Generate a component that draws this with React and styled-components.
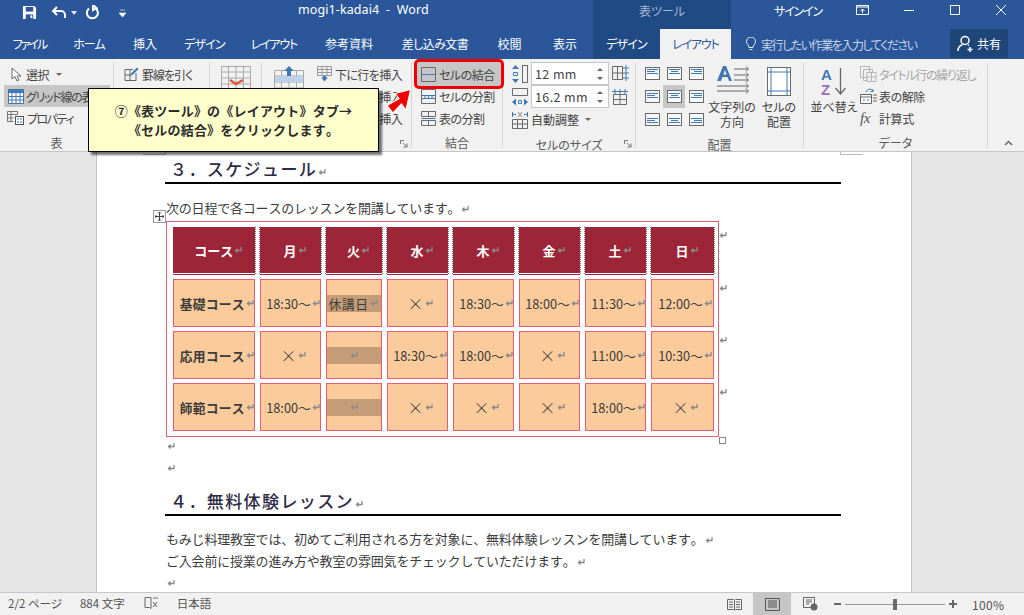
import React from 'react';
import styled, { createGlobalStyle } from 'styled-components';

const UI_FONT = '"Noto Sans CJK JP", "Noto Sans", sans-serif';

const Global = createGlobalStyle`
  html, body { margin: 0; padding: 0; overflow: hidden; }
  body { font-family: ${UI_FONT}; font-feature-settings: "palt"; }
`;

const Screen = styled.div`
  position: relative;
  width: 1024px;
  height: 615px;
  display: flex;
  flex-direction: column;
  overflow: hidden;
  background: #e6e6e6;
`;

/* title bar */
const TitleBar = styled.div`
  height: 29px;
  flex: none;
  display: flex;
  background: #2b579a;
  color: #fff;
`;
const QuickAccess = styled.div`
  width: 593px;
  display: flex;
  align-items: center;
  padding: 0 0 4px 22px;
  box-sizing: border-box;
  flex: none;
  font-size: 12.5px;
  font-family: "Noto Sans", sans-serif;
`;
const QuickIcon = styled.svg`
  flex: none;
  margin-right: ${p => p.$gap || 0}px;
`;
const DocName = styled.span`
  align-self: flex-start;
  line-height: 20px;
  margin-left: 172px;
  white-space: pre;
  letter-spacing: 0.1px;
`;
const ToolsLabel = styled.div`
  width: 138px;
  flex: none;
  background: #204a84;
  color: #a8bad6;
  font-size: 12px;
  text-align: center;
  line-height: 22px;
`;
const WindowArea = styled.div`
  flex: 1;
  display: flex;
  align-items: center;
  font-size: 12px;
  padding-bottom: 9px;
  padding-left: 43px;
`;
const SignIn = styled.span`
  width: 46px;
  margin-right: 36px;
  white-space: nowrap;
  letter-spacing: -1.2px;
`;
const WinIcon = styled.svg`
  flex: none;
  margin-right: ${p => p.$gap || 0}px;
`;

/* tabs */
const TabBar = styled.div`
  height: 30px;
  flex: none;
  display: flex;
  background: #2b579a;
  color: #fff;
  font-size: 12px;
`;
const Tab = styled.div`
  width: ${p => p.$w}px;
  flex: none;
  text-align: center;
  line-height: 30px;
  letter-spacing: ${p => p.$ls || 0}px;
  background: ${p => (p.$active ? '#f1f1f1' : p.$tool ? '#204a84' : 'transparent')};
  color: ${p => (p.$active ? '#2b579a' : '#fff')};
`;
const TellMe = styled.div`
  width: 219px;
  flex: none;
  display: flex;
  align-items: center;
  gap: 5px;
  padding-left: 15px;
  box-sizing: border-box;
  color: #c6d3e6;
  letter-spacing: -1.45px;
`;
const Share = styled.div`
  width: 58px;
  height: 29px;
  flex: none;
  display: flex;
  align-items: center;
  gap: 3px;
  padding-left: 7px;
  box-sizing: border-box;
  background: #1f4679;
`;

/* ribbon */
const Ribbon = styled.div`
  height: 93px;
  flex: none;
  display: flex;
  box-sizing: border-box;
  background: #f1f1f1;
  border-bottom: 1px solid #c6c6c6;
  color: #444;
  font-size: 12px;
`;
const Group = styled.section`
  position: relative;
  width: ${p => p.$w}px;
  flex: none;
  display: flex;
  flex-direction: column;
  box-sizing: border-box;
  margin: 4px 0 3px;
  border-right: 1px solid #d4d4d4;
`;
const GroupBody = styled.div`
  position: relative;
  flex: 1;
  display: flex;
  padding-left: ${p => p.$pad || 0}px;
`;
const GroupLabel = styled.div`
  height: 19px;
  flex: none;
  text-align: center;
  line-height: 28px;
  color: #5a5a5a;
`;
const Launcher = styled.svg`
  position: absolute;
  right: 3px;
  bottom: 0;
`;
const Stack = styled.div`
  display: flex;
  flex-direction: column;
  margin-top: ${p => p.$top || 0}px;
  width: ${p => (p.$w ? `${p.$w}px` : 'auto')};
`;
const SmallBtn = styled.div`
  height: 22px;
  flex: none;
  display: flex;
  align-items: center;
  gap: ${p => p.$gap ?? 3}px;
  padding-left: ${p => p.$pad ?? 0}px;
  white-space: nowrap;
  letter-spacing: ${p => p.$ls ?? -0.4}px;
  background: ${p => (p.$on ? '#c6c6c6' : 'transparent')};
  color: ${p => (p.$off ? '#a6a6a6' : '#444')};
`;
const BigBtn = styled.div`
  width: ${p => p.$w}px;
  flex: none;
  display: flex;
  flex-direction: column;
  align-items: center;
  text-align: center;
  line-height: 15px;
  white-space: nowrap;
`;
const BigIconSlot = styled.div`
  height: 36px;
  display: flex;
  align-items: center;
`;
const Arrow = styled.span`
  width: 0;
  height: 0;
  margin-left: 3px;
  border-left: 3px solid transparent;
  border-right: 3px solid transparent;
  border-top: 3px solid #666;
`;
const SizeRow = styled.div`
  height: 23px;
  display: flex;
  align-items: center;
  gap: 3px;
  white-space: nowrap;
`;
const Spin = styled.div`
  width: 78px;
  height: 23px;
  box-sizing: border-box;
  display: flex;
  align-items: center;
  justify-content: space-between;
  padding: 0 5px 0 3px;
  background: #fff;
  border: 1px solid #c6c6c6;
  font-size: 12.5px;
  color: #444;
  letter-spacing: 0.4px;
`;
const SpinMarks = styled.span`
  display: flex;
  flex-direction: column;
  gap: 6px;
`;
const AlignGrid = styled.div`
  display: grid;
  grid-template-columns: repeat(3, 22px);
  grid-template-rows: repeat(3, 23px);
  width: 66px;
  height: 69px;
  flex: none;
  margin-top: -1px;
`;
const AlignCell = styled.div`
  display: flex;
  align-items: center;
  justify-content: center;
  padding-bottom: 1px;
  box-sizing: border-box;
  background: ${p => (p.$on ? '#c6c6c6' : 'transparent')};
`;
const Collapse = styled.svg`
  align-self: flex-end;
  margin: 0 0 5px 16px;
  flex: none;
`;

/* overlays */
const MergeRing = styled.div`
  position: absolute;
  left: 2px;
  top: -4px;
  width: 90px;
  height: 30px;
  box-sizing: border-box;
  border: 3px solid #f00000;
  border-radius: 5px;
  background: #c6c6c6;
`;
const Callout = styled.div`
  position: absolute;
  left: 88px;
  top: 88px;
  width: 291px;
  height: 64px;
  box-sizing: border-box;
  padding-top: 12px;
  border: 1px solid #000;
  background: #ffffcc;
  box-shadow: 3px 3px 2px rgba(0, 0, 0, 0.55);
  text-align: center;
  font-size: 13px;
  line-height: 19px;
  font-weight: 700;
  color: #2c2c2c;
  font-feature-settings: normal;
  font-kerning: none;
  text-spacing-trim: space-all;
  letter-spacing: 0.2px;
`;
const RedArrow = styled.svg`
  position: absolute;
  left: 384px;
  top: 86px;
`;

/* document */
const DocArea = styled.div`
  flex: 1;
  display: flex;
  min-height: 0;
`;
const Page = styled.main`
  position: relative;
  width: 816px;
  margin-left: 96px;
  box-sizing: border-box;
  background: #fff;
  border-left: 1px solid #c6c6c6;
  border-right: 1px solid #c6c6c6;
  padding: 6px 70px 0 68px;
  color: #3c3c3c;
  overflow: hidden;
  font-kerning: none;
  text-spacing-trim: space-all;
`;
const Corner = styled.div`
  position: absolute;
  top: -1px;
  width: 23px;
  height: 4px;
  box-sizing: border-box;
  border: 1px solid #bbb;
  ${p => (p.$right ? 'left: 743px; border-right: 0;' : 'left: 46px; border-left: 0;')}
`;
const Heading = styled.h2`
  margin: ${p => p.$top || 0}px 0 0;
  height: 24px;
  padding-left: 5px;
  border-bottom: 2px solid #000;
  font-size: 17px;
  line-height: 21px;
  font-weight: 500;
  letter-spacing: 1.4px;
  color: #2f2b45;
  font-feature-settings: normal;
  white-space: nowrap;
`;
const Para = styled.p`
  margin: ${p => p.$top || 0}px 0 0;
  height: 22px;
  padding-left: 1px;
  font-size: 13px;
  letter-spacing: -0.2px;
  line-height: 22px;
  white-space: nowrap;
  font-feature-settings: normal;
`;
const Mark = styled.svg`
  display: inline-block;
  vertical-align: -1px;
  flex: none;
`;
const TableLine = styled.div`
  display: flex;
  margin: 2px 0 0 1px;
`;
const TableBox = styled.div`
  position: relative;
  width: 553px;
  height: 216px;
  flex: none;
  box-sizing: border-box;
  padding: 5px 0 0 6px;
  border: 1px solid #e0606f;
`;
const CourseGrid = styled.div`
  display: grid;
  grid-template-columns: 81.5px 61px 56px 61px 61px 61px 61px 63px;
  grid-template-rows: 48px 48px 48px 48px;
  column-gap: 5px;
  row-gap: 4px;
`;
const HeadCell = styled.div`
  position: relative;
  display: flex;
  align-items: center;
  justify-content: center;
  box-sizing: border-box;
  background: #9c2637;
  border-bottom: 1px solid #9c2637;
  box-shadow: inset 0 -1px 0 #fff;
  color: #fff;
  font-size: 13px;
  font-weight: 700;
  font-feature-settings: normal;
  padding-left: 10px;
  &:not(:last-child)::after {
    content: '';
    position: absolute;
    left: 100%;
    top: 0;
    bottom: 0;
    width: 3px;
    border-left: 1px dotted #777;
    border-right: 1px dotted #777;
  }
`;
const Cell = styled.div`
  position: relative;
  display: flex;
  align-items: center;
  justify-content: center;
  box-sizing: border-box;
  padding-left: ${p => (p.$band ? 0 : 7)}px;
  background: #fbcb9b;
  border: 1px solid #e0606f;
  color: #3c3c3c;
  font-size: 12.75px;
  font-weight: ${p => (p.$bold ? 700 : 400)};
  letter-spacing: ${p => (p.$bold ? 0.3 : 0)}px;
  font-feature-settings: normal;
  white-space: nowrap;
`;
const Cross = styled.span`
  font-size: 16px;
  font-weight: 300;
  line-height: 16px;
`;
const Band = styled.div`
  width: 100%;
  height: 17px;
  background: #c49c78;
  display: flex;
  align-items: center;
  justify-content: center;
  letter-spacing: 0.6px;
`;
const RowEnds = styled.div`
  display: grid;
  grid-template-rows: 53px 52px 52px 52px;
  padding-top: 10px;
  margin-left: -1px;
`;
const EndSlot = styled.div`
  height: 10px;
  display: flex;
`;
const MoveHandle = styled.div`
  position: absolute;
  left: -14px;
  top: -12px;
  width: 11px;
  height: 11px;
  border: 1px solid #999;
  background: #fff;
  display: flex;
  align-items: center;
  justify-content: center;
`;
const SizeHandle = styled.div`
  position: absolute;
  right: -8px;
  bottom: -8px;
  width: 5px;
  height: 5px;
  border: 1px solid #888;
  background: #fff;
`;
const Blank = styled.div`
  height: 22px;
  padding-left: 1px;
  display: flex;
  align-items: center;
  margin-top: ${p => p.$top || 0}px;
`;

/* status bar */
const StatusBar = styled.footer`
  height: 23px;
  flex: none;
  display: flex;
  align-items: stretch;
  box-sizing: border-box;
  border-top: 1px solid #c6c6c6;
  background: #f1f1f1;
  color: #555;
  font-size: 11.5px;
`;
const StatusLeft = styled.div`
  width: 727px;
  display: flex;
  align-items: center;
  padding: 0 0 2px 8px;
  box-sizing: border-box;
  flex: none;
`;
const StatusItem = styled.span`
  margin-right: ${p => p.$gap || 0}px;
  display: flex;
  align-items: center;
`;
const ViewSlot = styled.div`
  width: ${p => p.$w}px;
  margin-left: ${p => p.$left || 0}px;
  flex: none;
  display: flex;
  align-items: center;
  justify-content: center;
  background: ${p => (p.$on ? '#c6c6c6' : 'transparent')};
`;
const Zoom = styled.div`
  display: flex;
  align-items: center;
  flex: none;
  margin-left: 16px;
`;
const ZoomTrack = styled.div`
  position: relative;
  width: 100px;
  height: 1px;
  margin: 0 4px;
  background: #9a9a9a;
`;
const ZoomThumb = styled.div`
  position: absolute;
  left: 48px;
  top: -5px;
  width: 4px;
  height: 11px;
  background: #6a6a6a;
`;
const ZoomValue = styled.span`
  margin-left: 15px;
  font-size: 12px;
  letter-spacing: 0.3px;
`;

/* icons */
const BLUE = '#3f78b5';
const GREY = '#6a6a6a';

const Ret = () => (
  <Mark width="10" height="9" viewBox="0 0 10 9">
    <path d="M8 1v3.500H2.500M4.500 2.500l-2 2 2 2" fill="none" stroke="#8a8a8a" strokeWidth="1.300" />
  </Mark>
);

const GridLinesIcon = () => (
  <svg width="16" height="15" viewBox="0 0 16 15" style={{ flex: 'none' }}>
    <path d="M.5.500h15v14H.5z" fill="#fff" stroke={BLUE} />
    <path d="M1 1h14v3H1z" fill={BLUE} />
    <path d="M.5 7.500h15M.5 11h15M4 4v10M8 4v10M12 4v10" stroke={BLUE} />
  </svg>
);

const Pointer = () => (
  <svg width="11" height="15" viewBox="0 0 11 15">
    <path d="M1 1v11l3-2.500 2 4.500 2-1-2-4h4z" fill="#fff" stroke="#666" />
  </svg>
);

const Pencil = () => (
  <svg width="16" height="16" viewBox="0 0 16 16">
    <path d="M2 3.500h8M2 3.500v11h11V7M2 9h6M7 4v10" fill="none" stroke="#666" />
    <path d="M7 10l1.500-3L14 1.500l1.500 1.500L10 8.500z" fill={BLUE} />
  </svg>
);

const Props = () => (
  <svg width="18" height="16" viewBox="0 0 18 16">
    <path d="M.5 1.500h10v3M.5 1.500v10h6M.5 4.500h10M4 1.500v10M.5 8h6" fill="none" stroke="#777" />
    <rect x="8.500" y="6.500" width="8" height="8" fill="#fff" stroke="#555" />
    <path d="M10 9h2M13 9h2M10 12h2M13 12h2" stroke={BLUE} />
  </svg>
);

const DeleteTable = () => (
  <svg width="30" height="30" viewBox="0 0 30 30">
    <path d="M.5.500h29v22H.5zM.5 6h29M.5 12h29M.5 18h29M7.500.500v22M15 .500v22M22.500.500v22" fill="none" stroke="#aaa" />
    <path d="M9 14l6 4 7-4" fill="none" stroke="#d8583a" strokeWidth="2.400" />
  </svg>
);

const InsertAbove = () => (
  <svg width="30" height="30" viewBox="0 0 30 30">
    <path d="M.5 4.500h29v25H.5zM.5 10h29M.5 16h29M.5 22h29M7.500 4.500v25M15 4.500v25M22.500 4.500v25" fill="none" stroke="#aaa" />
    <rect x="1" y="10" width="28" height="6" fill="#bcd2e8" />
    <path d="M15 0l5 5h-3v5h-4V5h-3z" fill={BLUE} />
  </svg>
);

const InsertRow = () => (
  <svg width="15" height="16" viewBox="0 0 15 16" style={{ flex: 'none' }}>
    <path d="M.5.500h14v9H.5zM.5 3.500h14M.5 6.500h14M5 .500v9M10 .500v9" fill="none" stroke="#999" />
    <path d="M7.500 15.500l3.500-4H9V10H6v1.500H4z" fill={BLUE} />
  </svg>
);

const MergeIcon = () => (
  <svg width="15" height="15" viewBox="0 0 15 15" style={{ flex: 'none' }}>
    <path d="M.5.500h14v14H.5zM.5 7.500h14" fill="none" stroke={GREY} />
    <path d="M1 7.500h13" stroke={BLUE} />
  </svg>
);
const SplitIcon = () => (
  <svg width="15" height="15" viewBox="0 0 15 15" style={{ flex: 'none' }}>
    <path d="M.5.500h14v14H.5z" fill="none" stroke={GREY} />
    <path d="M.5 6.500h14M.5 9.500h14M4 6.500v3M7.500 6.500v3M11 6.500v3" stroke={BLUE} />
  </svg>
);
const SplitTableIcon = () => (
  <svg width="15" height="15" viewBox="0 0 15 15" style={{ flex: 'none' }}>
    <path d="M.5.500h14v5H.5zM.5 9.500h14v5H.5zM7.500.500v5M7.500 9.500v5" fill="none" stroke={GREY} />
    <path d="M.5 7.500h14" stroke={BLUE} />
  </svg>
);

const RowHeight = () => (
  <svg width="16" height="18" viewBox="0 0 16 18" style={{ flex: 'none' }}>
    <rect x="10.500" y=".5" width="5" height="17" fill="none" stroke={GREY} />
    <path d="M3.500 0L0 4h7zM3.500 18L0 14h7z" fill={BLUE} />
    <path d="M1.500 7.500h4v3h-4z" fill="none" stroke={BLUE} />
  </svg>
);
const ColWidth = () => (
  <svg width="16" height="18" viewBox="0 0 16 18" style={{ flex: 'none' }}>
    <path d="M.5.500h15v7H.5z" fill="none" stroke={GREY} />
    <path d="M0 14l4-3.500v7zM16 14l-4-3.500v7z" fill={BLUE} />
    <path d="M6.500 12.500h3v3h-3z" fill="none" stroke={BLUE} />
  </svg>
);
const AutoFit = () => (
  <svg width="16" height="18" viewBox="0 0 16 18" style={{ flex: 'none' }}>
    <path d="M.5 8.500h15v9H.5zM.5 13h15M5.500 8.500v9M10.500 8.500v9" fill="none" stroke={GREY} />
    <path d="M0 3.500h4M12 3.500h4M.5 1v5M15.500 1v5" stroke={BLUE} />
    <path d="M6 1l4 5M10 1L6 6" stroke="#888" />
  </svg>
);
const Distribute = ({ vertical }) => (
  <svg width="17" height="17" viewBox="0 0 17 17" style={{ flex: 'none' }}>
    {vertical ? (
      <>
        <path d="M1.500 6.500h13v10h-13zM1.500 11.500h13M8 6.500v10" fill="none" stroke={GREY} />
        <path d="M3 1v5M8 1v5M13 1v5M0 3.500h16" stroke={BLUE} />
      </>
    ) : (
      <>
        <path d="M.5 1.500h10v13H.5zM.5 8h10M5.500 1.500v13" fill="none" stroke={GREY} />
        <path d="M14 0v16M11 3h6M11 8h6M11 13h6" stroke={BLUE} />
      </>
    )}
  </svg>
);

const AlignIcon = ({ v, h }) => {
  const y = { t: 3, m: 4, b: 6 }[v];
  const [a, w] = h === 'l' ? [2, 8] : h === 'c' ? [4, 7] : [5, 8];
  return (
    <svg width="15" height="13" viewBox="0 0 15 13">
      <rect x=".5" y=".5" width="14" height="12" fill="#f8f8f8" stroke={GREY} />
      <path d={`M2 ${y - 0.5}H13M${a} ${y + 1.5}h${w}M2 ${y + 3.5}H13`} stroke={BLUE} />
    </svg>
  );
};

const TextDir = () => (
  <svg width="33" height="32" viewBox="0 0 33 32">
    <path d="M1 16L7 1h3l6 15h-3l-1.500-4h-5L5 16zM7.300 9.500h3.400L9 5z" fill={BLUE} />
    <path d="M18 4h14M18 10h14M18 15h14M1 21h31M1 26h31" stroke="#666" fill="none" />
    <path d="M30 1.500l2.500 2.500-2.500 2.500M30 7.500l2.500 2.500-2.500 2.500M30 12.500l2.500 2.500-2.500 2.500M30 18.500l2.500 2.500-2.500 2.500M30 23.500l2.500 2.500-2.500 2.500" stroke="#666" fill="none" />
  </svg>
);
const CellMargin = () => (
  <svg width="24" height="29" viewBox="0 0 24 29">
    <rect x=".5" y=".5" width="23" height="28" fill="#fff" stroke={GREY} />
    <path d="M4 .5v28M20 .5v28M.5 5h23M.5 24h23" stroke={BLUE} />
  </svg>
);
const SortIcon = () => (
  <svg width="26" height="34" viewBox="0 0 26 34">
    <text x="0" y="16" fontFamily="Liberation Sans, sans-serif" fontWeight="700" fontSize="15" fill={BLUE}>A</text>
    <text x="0" y="31" fontFamily="Liberation Sans, sans-serif" fontWeight="700" fontSize="15" fill="#9a6fb8">Z</text>
    <path d="M19.500 4v26M14.500 24l5 6 5-6" fill="none" stroke="#666" strokeWidth="1.300" />
  </svg>
);
const RepeatIcon = () => (
  <svg width="17" height="16" viewBox="0 0 17 16" style={{ flex: 'none' }}>
    <path d="M.5.500h9v11h-9zM3.500 3.500h9v11h-9z" fill="#f1f1f1" stroke="#b4b4b4" />
    <path d="M7 6.500h9v9H7zM7 11h9M11.500 6.500v9" fill="#f1f1f1" stroke="#b4b4b4" />
  </svg>
);
const ConvertIcon = () => (
  <svg width="17" height="16" viewBox="0 0 17 16" style={{ flex: 'none' }}>
    <path d="M.5 6.500h11v9H.5zM.5 9h11" fill="#fff" stroke="#666" />
    <path d="M3 12h2M7 12h2" stroke={BLUE} />
    <path d="M13 7h4M13 10h4M13 13h4" stroke="#666" />
    <path d="M6 4c1-3 5-4 7-1M13 1v2.500h-2.500" fill="none" stroke={BLUE} />
  </svg>
);
const Launch = () => (
  <Launcher width="8" height="8" viewBox="0 0 8 8">
    <path d="M.5 4V.5H4M3 3l4 4M7 3.500V7H3.500" fill="none" stroke="#777" />
  </Launcher>
);
const SpinUpDown = () => (
  <SpinMarks>
    <svg width="6" height="3" viewBox="0 0 6 3"><path d="M3 0l3 3H0z" fill="#666" /></svg>
    <svg width="6" height="3" viewBox="0 0 6 3"><path d="M3 3L0 0h6z" fill="#666" /></svg>
  </SpinMarks>
);

const days = ['月', '火', '水', '木', '金', '土', '日'];
const courses = [
  { name: '基礎コース', times: ['18:30〜', '休講日', '×', '18:30〜', '18:00〜', '11:30〜', '12:00〜'] },
  { name: '応用コース', times: ['×', '', '18:30〜', '18:00〜', '×', '11:00〜', '10:30〜'] },
  { name: '師範コース', times: ['18:00〜', '', '×', '×', '×', '18:00〜', '×'] },
];

export default function App() {
  return (
    <Screen>
      <Global />
      <TitleBar>
        <QuickAccess>
          <QuickIcon $gap={14} width="15" height="15" viewBox="0 0 16 16">
            <path d="M1 1h12l2 2v12H1z" fill="#fff" />
            <path d="M4 2h8v5H4z" fill="#2b579a" />
            <path d="M4 10h8v5H4z" fill="#2b579a" />
            <path d="M9 11h2v3H9z" fill="#fff" />
          </QuickIcon>
          <QuickIcon $gap={4} width="16" height="14" viewBox="0 0 16 14">
            <path d="M6 1L2 5l4 4M2 5h8a4 4 0 0 1 4 4v3" fill="none" stroke="#fff" strokeWidth="2" />
          </QuickIcon>
          <QuickIcon $gap={9} width="6" height="4" viewBox="0 0 6 4">
            <path d="M0 0h6L3 4z" fill="#dfe6f1" />
          </QuickIcon>
          <QuickIcon $gap={19} width="14" height="15" viewBox="0 0 14 15">
            <path d="M9 3a5.500 5.500 0 1 1-6 .5M7 0v5l3.500-2z" fill="none" stroke="#fff" strokeWidth="2" />
          </QuickIcon>
          <QuickIcon width="7" height="8" viewBox="0 0 7 8">
            <path d="M1 1h5M0 4h7L3.500 8z" fill="#fff" stroke="#fff" strokeWidth=".6" />
          </QuickIcon>
          <DocName>mogi1-kadai4  -  Word</DocName>
        </QuickAccess>
        <ToolsLabel>表ツール</ToolsLabel>
        <WindowArea>
          <SignIn>サインイン</SignIn>
          <WinIcon $gap={35} width="13" height="10" viewBox="0 0 13 10">
            <path d="M.5.500h12v9H.5zM.5 2h12M6.500 8V4M4.500 6l2-2 2 2" fill="none" stroke="#fff" />
          </WinIcon>
          <WinIcon $gap={36} width="10" height="1" viewBox="0 0 10 1">
            <path d="M0 .5h10" stroke="#fff" />
          </WinIcon>
          <WinIcon $gap={36} width="10" height="10" viewBox="0 0 10 10">
            <path d="M.5.500h9v9h-9z" fill="none" stroke="#fff" />
          </WinIcon>
          <WinIcon width="10" height="10" viewBox="0 0 10 10">
            <path d="M0 0l10 10M10 0L0 10" stroke="#fff" />
          </WinIcon>
        </WindowArea>
      </TitleBar>

      <TabBar>
        <Tab $w={59} $ls={-2}>ファイル</Tab>
        <Tab $w={60} $ls={-1}>ホーム</Tab>
        <Tab $w={52}>挿入</Tab>
        <Tab $w={67} $ls={-0.8}>デザイン</Tab>
        <Tab $w={72} $ls={-1.2}>レイアウト</Tab>
        <Tab $w={78}>参考資料</Tab>
        <Tab $w={94} $ls={-0.6}>差し込み文書</Tab>
        <Tab $w={55}>校閲</Tab>
        <Tab $w={56}>表示</Tab>
        <Tab $w={67} $tool $ls={-0.8}>デザイン</Tab>
        <Tab $w={71} $active $ls={-1.2}>レイアウト</Tab>
        <TellMe>
          <svg width="10" height="14" viewBox="0 0 10 14">
            <path d="M3 10.500C3 8 .5 7.500.5 4.500a4.500 4.500 0 0 1 9 0C9.500 7.500 7 8 7 10.500zM3.500 12.500h3" fill="none" stroke="#e8edf5" />
          </svg>
          実行したい作業を入力してください
        </TellMe>
        <Share>
          <svg width="17" height="17" viewBox="0 0 17 17">
            <circle cx="8" cy="5.500" r="4" fill="none" stroke="#fff" strokeWidth="1.500" />
            <path d="M1 16c0-3 2-5.500 4.500-6.500M11 10l1 .5M13 12v5M10.500 14.500h5" fill="none" stroke="#fff" strokeWidth="1.500" />
          </svg>
          <span>共有</span>
        </Share>
      </TabBar>

      <Ribbon>
        <Group $w={114}>
          <GroupBody $pad={4}>
            <Stack $w={106}>
              <SmallBtn $pad={7} $gap={4}><Pointer />選択<Arrow /></SmallBtn>
              <SmallBtn $pad={4} $gap={2} $ls={-1.3} $on><GridLinesIcon />グリッド線の表示</SmallBtn>
              <SmallBtn $pad={3} $gap={2} $ls={-1.5}><Props />プロパティ</SmallBtn>
            </Stack>
          </GroupBody>
          <GroupLabel>表</GroupLabel>
        </Group>
        <Group $w={96}>
          <GroupBody $pad={9}>
            <Stack>
              <SmallBtn $gap={3} $ls={-1}><Pencil />罫線を引く</SmallBtn>
            </Stack>
          </GroupBody>
          <GroupLabel />
        </Group>
        <Group $w={52}>
          <GroupBody $pad={11}>
            <BigIconSlot><DeleteTable /></BigIconSlot>
          </GroupBody>
          <GroupLabel />
        </Group>
        <Group $w={150}>
          <GroupBody $pad={12}>
            <BigIconSlot><InsertAbove /></BigIconSlot>
            <Stack>
              <SmallBtn $pad={13} $gap={3} $ls={-0.6}><InsertRow />下に行を挿入</SmallBtn>
              <SmallBtn $pad={13} $gap={3} $ls={-0.6}><InsertRow />左に列を挿入</SmallBtn>
              <SmallBtn $pad={13} $gap={3} $ls={-0.6}><InsertRow />右に列を挿入</SmallBtn>
            </Stack>
          </GroupBody>
          <GroupLabel />
          <Launch />
        </Group>
        <Group $w={91}>
          <MergeRing />
          <GroupBody $pad={9}>
            <Stack>
              <SmallBtn $gap={3} $ls={-0.5}><MergeIcon />セルの結合</SmallBtn>
              <SmallBtn $gap={3} $ls={-0.5}><SplitIcon />セルの分割</SmallBtn>
              <SmallBtn $gap={3} $ls={-0.5}><SplitTableIcon />表の分割</SmallBtn>
            </Stack>
          </GroupBody>
          <GroupLabel>結合</GroupLabel>
        </Group>
        <Group $w={133}>
          <GroupBody $pad={9}>
            <Stack $top={-1}>
              <SizeRow>
                <RowHeight />
                <Spin>12 mm<SpinUpDown /></Spin>
                <Distribute />
              </SizeRow>
              <SizeRow>
                <ColWidth />
                <Spin>16.2 mm<SpinUpDown /></Spin>
                <Distribute vertical />
              </SizeRow>
              <SizeRow>
                <AutoFit />
                自動調整<Arrow />
              </SizeRow>
            </Stack>
          </GroupBody>
          <GroupLabel>セルのサイズ</GroupLabel>
          <Launch />
        </Group>
        <Group $w={168}>
          <GroupBody $pad={5}>
            <AlignGrid>
              {['t', 'm', 'b'].map(v =>
                ['l', 'c', 'r'].map(h => (
                  <AlignCell key={v + h} $on={v === 'm' && h === 'c'}>
                    <AlignIcon v={v} h={h} />
                  </AlignCell>
                ))
              )}
            </AlignGrid>
            <BigBtn $w={50}>
              <BigIconSlot><TextDir /></BigIconSlot>
              <div>文字列の<br />方向</div>
            </BigBtn>
            <BigBtn $w={44}>
              <BigIconSlot><CellMargin /></BigIconSlot>
              <div>セルの<br />配置</div>
            </BigBtn>
          </GroupBody>
          <GroupLabel>配置</GroupLabel>
        </Group>
        <Group $w={184}>
          <GroupBody $pad={7}>
            <BigBtn $w={46}>
              <BigIconSlot><SortIcon /></BigIconSlot>
              <div>並べ替え</div>
            </BigBtn>
            <Stack>
              <SmallBtn $pad={3} $gap={2} $ls={-1.3} $off><RepeatIcon />タイトル行の繰り返し</SmallBtn>
              <SmallBtn $pad={3} $gap={2}><ConvertIcon />表の解除</SmallBtn>
              <SmallBtn $pad={3} $gap={5}>
                <svg width="14" height="15" viewBox="0 0 14 15">
                  <text x="0" y="12" fontFamily="Liberation Serif, serif" fontStyle="italic" fontSize="15" fill="#555">fx</text>
                </svg>
                計算式
              </SmallBtn>
            </Stack>
          </GroupBody>
          <GroupLabel>データ</GroupLabel>
        </Group>
        <Collapse width="9" height="6" viewBox="0 0 9 6">
          <path d="M1 5l3.500-3.500L8 5" fill="none" stroke="#666" strokeWidth="1.500" />
        </Collapse>
      </Ribbon>

      <DocArea>
        <Page>
          <Corner />
          <Corner $right />
          <Heading>３．スケジュール<Ret /></Heading>
          <Para $top={13}>次の日程で各コースのレッスンを開講しています。<Ret /></Para>
          <TableLine>
            <TableBox>
              <MoveHandle>
                <svg width="9" height="9" viewBox="0 0 9 9">
                  <path d="M4.500 0v9M0 4.500h9M3 1.500L4.500 0 6 1.500M3 7.500L4.500 9 6 7.500M1.500 3L0 4.500 1.500 6M7.500 3L9 4.500 7.500 6" fill="none" stroke="#444" />
                </svg>
              </MoveHandle>
              <CourseGrid>
                <HeadCell>コース<Ret /></HeadCell>
                {days.map(d => <HeadCell key={d}>{d}<Ret /></HeadCell>)}
                {courses.map(c => (
                  <React.Fragment key={c.name}>
                    <Cell $bold>{c.name}<Ret /></Cell>
                    {c.times.map((t, i) =>
                      i === 1 ? (
                        <Cell key={i} $band><Band>{t}<Ret /></Band></Cell>
                      ) : (
                        <Cell key={i}>{t === '×' ? <Cross>{t}</Cross> : t}<Ret /></Cell>
                      )
                    )}
                  </React.Fragment>
                ))}
              </CourseGrid>
              <SizeHandle />
            </TableBox>
            <RowEnds>
              <EndSlot><Ret /></EndSlot>
              <EndSlot><Ret /></EndSlot>
              <EndSlot><Ret /></EndSlot>
              <EndSlot><Ret /></EndSlot>
            </RowEnds>
          </TableLine>
          <Blank $top={-5}><Ret /></Blank>
          <Blank><Ret /></Blank>
          <Heading $top={11}>４．無料体験レッスン<Ret /></Heading>
          <Para $top={12}>もみじ料理教室では、初めてご利用される方を対象に、無料体験レッスンを開講しています。<Ret /></Para>
          <Para>ご入会前に授業の進み方や教室の雰囲気をチェックしていただけます。<Ret /></Para>
          <Blank><Ret /></Blank>
        </Page>
      </DocArea>

      <StatusBar>
        <StatusLeft>
          <StatusItem $gap={18}>2/2 ページ</StatusItem>
          <StatusItem $gap={19}>884 文字</StatusItem>
          <StatusItem $gap={18}>
            <svg width="15" height="14" viewBox="0 0 15 14">
              <path d="M5.500 1.500H1v10h4.500l1.500 1V1.500zM9 6l4 5M13 6L9 11M9 2h5" fill="none" stroke="#666" />
            </svg>
          </StatusItem>
          <StatusItem>日本語</StatusItem>
        </StatusLeft>
        <ViewSlot $w={15}>
          <svg width="15" height="13" viewBox="0 0 15 13">
            <path d="M.5 1.500h6l1 1 1-1h6v10h-6l-1 1-1-1h-6zM7.500 2.500v9M2 4h4M2 6.500h4M2 9h4M9 4h4M9 6.500h4M9 9h4" fill="none" stroke="#666" />
          </svg>
        </ViewSlot>
        <ViewSlot $w={38} $left={11} $on>
          <svg width="15" height="13" viewBox="0 0 15 13">
            <path d="M.5.500h14v12H.5zM3 3h9M3 5h9M3 7h9M3 9h9" fill="none" stroke="#555" />
          </svg>
        </ViewSlot>
        <ViewSlot $w={15} $left={12}>
          <svg width="15" height="14" viewBox="0 0 15 14">
            <path d="M.5.500h11v10H.5zM3 3h6M3 5h6M3 7h3" fill="none" stroke="#666" />
            <circle cx="11" cy="10" r="3.500" fill="#666" />
          </svg>
        </ViewSlot>
        <Zoom>
          <svg width="7" height="3" viewBox="0 0 7 3"><path d="M0 0h7v2H0z" fill="#666" /></svg>
          <ZoomTrack><ZoomThumb /></ZoomTrack>
          <svg width="8" height="8" viewBox="0 0 8 8"><path d="M3 0h2v3h3v2H5v3H3V5H0V3h3z" fill="#666" /></svg>
          <ZoomValue>100%</ZoomValue>
        </Zoom>
      </StatusBar>

      <Callout>
        ⑦《表ツール》の《レイアウト》タブ→<br />
        《セルの結合》をクリックします。
      </Callout>
      <RedArrow width="30" height="30" viewBox="0 0 30 30">
        <path d="M26.700 3.300L11 7.500l4 5L3 19.500 9 27l8.500-9 4.500 6z" fill="#f00000" stroke="#fff" strokeWidth="1.200" />
      </RedArrow>
    </Screen>
  );
}
